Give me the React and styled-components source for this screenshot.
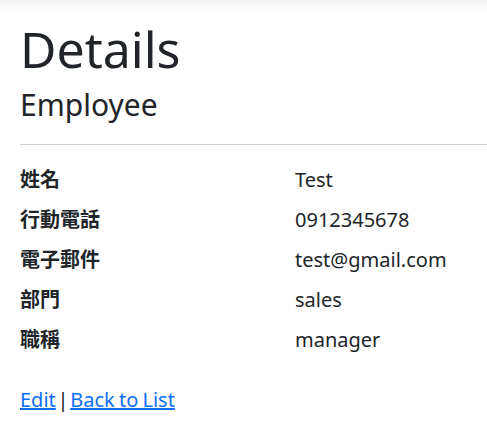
import React from 'react';
import styled, {createGlobalStyle} from 'styled-components';

const GlobalStyle = createGlobalStyle`
    html, body {
        margin: 0;
        padding: 0;
        background: #fff;
    }
    body {
        font-family: "Noto Sans", "Noto Sans CJK TC", sans-serif;
        color: #212529;
        overflow: hidden;
    }
`;

const employee = [
    {label: '姓名', value: 'Test'},
    {label: '行動電話', value: '0912345678'},
    {label: '電子郵件', value: 'test@gmail.com'},
    {label: '部門', value: 'sales'},
    {label: '職稱', value: 'manager'},
];

const App = () => {
    return (
        <Page>
            <GlobalStyle />
            <NavShadow />
            <Main>
                <Title>Details</Title>
                <SubTitle>Employee</SubTitle>
                <Divider />
                <DetailList>
                    {employee.map((e) => (
                        <React.Fragment key={e.label}>
                            <DetailTerm>{e.label}</DetailTerm>
                            <DetailValue>{e.value}</DetailValue>
                        </React.Fragment>
                    ))}
                </DetailList>
                <Actions>
                    <ActionLink href="#">Edit</ActionLink> | <ActionLink href="#">Back to List</ActionLink>
                </Actions>
            </Main>
        </Page>
    );
};

const Page = styled.div`
    display: flex;
    flex-direction: column;
    width: 487px;
    min-height: 426px;
`;

const NavShadow = styled.div`
    height: 14px;
    background: linear-gradient(to bottom, #f2f2f2, #fafafa 50%, #fff);
`;

const Main = styled.main`
    display: flex;
    flex-direction: column;
    padding-left: 20px;
`;

const Title = styled.h1`
    margin: 5px 0 8px;
    font-size: 50px;
    font-weight: 400;
    line-height: 1.2;
`;

const SubTitle = styled.h4`
    margin: 0;
    font-size: 30px;
    font-weight: 400;
    line-height: 1.2;
`;

const Divider = styled.hr`
    margin: 21px 0 20px;
    border: 0;
    border-top: 1px solid #cfcfcf;
`;

const DetailList = styled.dl`
    display: grid;
    grid-template-columns: 275px 1fr;
    margin: 0 0 20px;
    font-size: 20px;
    line-height: 30px;
`;

const DetailTerm = styled.dt`
    font-weight: 700;
    margin-bottom: 10px;
`;

const DetailValue = styled.dd`
    margin: 0 0 10px;
`;

const Actions = styled.p`
    margin: 0;
    font-size: 20px;
    line-height: 30px;
    word-spacing: -3.5px;
`;

const ActionLink = styled.a`
    color: #0d6efd;
    text-decoration: underline;
    word-spacing: -1px;
`;

export default App;
